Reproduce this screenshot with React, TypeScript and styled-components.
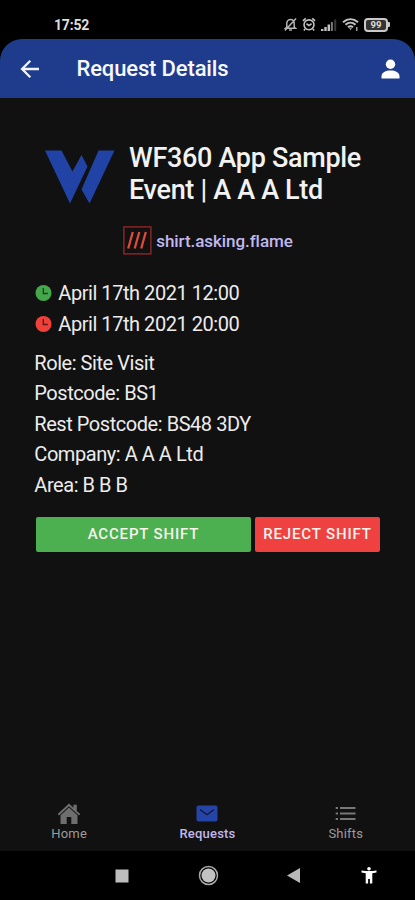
import React from 'react';
import styled, { createGlobalStyle } from 'styled-components';

const GlobalStyle = createGlobalStyle`
  * { box-sizing: border-box; }
  html, body { margin: 0; background: #000; }
  body { font-family: Roboto, "Liberation Sans", sans-serif; color: #f0f0f0; }
  svg { display: block; flex: none; }
`;

const Screen = styled.div`
  display: flex;
  flex-direction: column;
  width: 415px;
  height: 900px;
  overflow: hidden;
  background: #000;
`;

const StatusBar = styled.div`
  display: flex;
  align-items: center;
  justify-content: space-between;
  height: 39px;
  flex: none;
  padding: 10px 25px 0 54px;
`;

const Clock = styled.span`
  font-size: 14px;
  font-weight: 700;
  line-height: 18px;
  letter-spacing: -0.2px;
  color: #dedede;
`;

const StatusIcons = styled.div`
  display: flex;
  align-items: center;
  gap: 5px;
`;

const Header = styled.header`
  display: flex;
  align-items: center;
  height: 59px;
  flex: none;
  padding: 0 15px 0 20px;
  background: #1f3c8c;
  border-radius: 22px 22px 0 0;
`;

const HeaderTitle = styled.h1`
  flex: 1;
  margin: 0 0 0 36.5px;
  font-size: 22px;
  font-weight: 500;
  line-height: 28px;
  letter-spacing: -0.14px;
  color: #f7f8fc;
`;

const Content = styled.main`
  flex: 1;
  padding: 44px 35px 0;
  background: #111;
`;

const EventRow = styled.div`
  display: flex;
  align-items: center;
  gap: 14.5px;
  height: 64px;
  padding-left: 9.5px;
`;

const EventTitle = styled.h2`
  margin: 0;
  font-size: 27px;
  font-weight: 500;
  line-height: 32px;
  letter-spacing: -0.32px;
  white-space: nowrap;
  color: #f2f2f2;
`;

const LocationLink = styled.div`
  display: flex;
  align-items: center;
  justify-content: center;
  gap: 4px;
  height: 29px;
  margin: 20px 0 23px 1px;
`;

const LocationText = styled.span`
  font-size: 17px;
  font-weight: 500;
  line-height: 24px;
  letter-spacing: -0.06px;
  color: #c0b8ee;
`;

const Lines = styled.div<{ $top?: number }>`
  display: flex;
  flex-direction: column;
  margin-top: ${(p) => p.$top ?? 0}px;
`;

const Line = styled.div`
  display: flex;
  align-items: center;
  gap: 6px;
  height: 30.5px;
  margin-left: -0.7px;
  font-size: 20px;
  line-height: 30px;
  letter-spacing: -0.45px;
  white-space: nowrap;
  color: #ececec;
`;

const Actions = styled.div`
  display: flex;
  gap: 4px;
  margin: 16.5px 0 0 1px;
`;

const Action = styled.button<{ $color: string; $width: number }>`
  width: ${(p) => p.$width}px;
  height: 35px;
  padding: 0;
  border: 0;
  border-radius: 2px;
  background: ${(p) => p.$color};
  color: #f6f3ef;
  font-family: inherit;
  font-size: 15px;
  font-weight: 500;
  letter-spacing: 0.85px;
  white-space: nowrap;
`;

const Tabs = styled.nav`
  display: flex;
  height: 56px;
  flex: none;
  background: #111;
`;

const Tab = styled.div<{ $active?: boolean }>`
  display: flex;
  flex: 1;
  flex-direction: column;
  align-items: center;
  padding-top: 6px;
  font-size: 13px;
  font-weight: ${(p) => (p.$active ? 500 : 400)};
  line-height: 16px;
  letter-spacing: 0.2px;
  color: ${(p) => (p.$active ? '#c0b8ee' : '#9c9c9c')};
`;

const TabIcon = styled.div`
  display: flex;
  align-items: center;
  height: 25px;
`;

const SystemBar = styled.div`
  display: grid;
  grid-template-columns: 80px 84px 88px 82px 70px;
  align-items: center;
  justify-items: center;
  height: 49px;
  flex: none;
`;

const SystemButton = styled.div<{ $column: number }>`
  grid-column: ${(p) => p.$column};
`;

const SilentIcon = () => (
  <svg width="13" height="15" viewBox="0 0 14 16" fill="none" stroke="#b5b5b5" strokeWidth="1.6">
    <path d="M3 11V7c0-3 2-4.5 4-4.5S11 4 11 7v4l1.3 1H1.7zM5.5 13.8h3M1 14.5 13 1.5" />
  </svg>
);

const AlarmIcon = () => (
  <svg width="14" height="15" viewBox="0 0 15 16" fill="none" stroke="#c4c4c4" strokeWidth="1.7">
    <circle cx="7.5" cy="8.3" r="5.3" />
    <path d="M1 4.2 4 1.4M14 4.2l-3-2.8M4.8 7.2l2.7 2 2.7-2M3.3 12.7 2 14.4M11.7 12.7l1.3 1.7" />
  </svg>
);

const SignalIcon = () => (
  <svg width="16" height="14" viewBox="0 0 16 14">
    <path fill="#c4c4c4" d="M0 11h2.4v2H0zM3.3 9h2.4v4H3.3zM6.6 6.5H9V13H6.6z" />
    <path fill="#777" d="M9.9 4h2v9h-2z" />
    <path fill="#383838" d="M13.2 1.5h2V13h-2z" />
  </svg>
);

const WifiIcon = () => (
  <svg width="17" height="15" viewBox="0 0 17 15" fill="none" stroke="#c4c4c4" strokeWidth="2">
    <path d="M1 5.2c4.6-4 10.4-4 15 0M3.5 7.8c3-2.7 7-2.7 10 0M6 10.3c1.6-1.4 3.4-1.4 5 0" />
    <path d="M7 11.2h3L8.5 13z" fill="#c4c4c4" stroke="none" />
    <path d="M14.8 10v4" strokeWidth="1.2" />
  </svg>
);

const BatteryBody = styled.div`
  display: flex;
  align-items: center;
  justify-content: center;
  width: 24px;
  height: 14px;
  border: 2px solid #c9c9c9;
  border-radius: 4px;
  background: #333;
  color: #ddd;
  font-size: 9.5px;
  font-weight: 700;
  line-height: 9px;
`;

const Battery = styled.div`
  display: flex;
  align-items: center;

  &::after {
    content: '';
    width: 2px;
    height: 5px;
    background: #c9c9c9;
    border-radius: 0 1px 1px 0;
  }
`;

const BackIcon = () => (
  <svg width="20" height="20" viewBox="0 0 20 20" fill="none" stroke="#f2f4fa" strokeWidth="2.3">
    <path d="M19 10H2.5M10.3 1.8 2.1 10l8.2 8.2" />
  </svg>
);

const PersonIcon = () => (
  <svg width="19" height="20" viewBox="0 0 19 20" fill="#fff">
    <circle cx="9.5" cy="5.3" r="4.7" />
    <path d="M.5 19.5v-2.2c0-3.8 4.3-5.8 9-5.8s9 2 9 5.8v2.2z" />
  </svg>
);

const LogoSvg = styled.svg`
  width: 70px;
  height: 54px;
  margin-top: 5px;
  fill: #2143a5;
`;

const Logo = () => (
  <LogoSvg viewBox="0 0 70 54">
    <path d="M0 .5h16.5L27.5 21.5 36.5 5l6 11.5L25 53.5z" />
    <path d="M53.5.5H69.5L44.5 53.5 36.5 39.5z" />
  </LogoSvg>
);

const What3WordsIcon = () => (
  <svg width="29" height="29" viewBox="0 0 29 29" fill="none">
    <rect x=".9" y=".9" width="27" height="27" stroke="#8e2727" strokeWidth="1.4" />
    <path d="M9.8 6 5.2 22.5M16.3 6l-4.6 16.5M22.8 6l-4.6 16.5" stroke="#df4939" strokeWidth="2.3" />
  </svg>
);

const ClockIcon = ({ color }: { color: string }) => (
  <svg width="18" height="18" viewBox="0 0 18 18">
    <circle cx="9.5" cy="9" r="8" fill={color} />
    <path d="M9.3 4v5.5h4.5" fill="none" stroke="#151515" strokeOpacity=".75" strokeWidth="1.3" />
  </svg>
);

const HomeIcon = () => (
  <svg width="24" height="22" viewBox="0 0 24 22" fill="#6e6e6e">
    <path d="M12 .5.7 11l1.3 1.4L12 3.2l10 9.2 1.3-1.4L19.8 8V1.8h-3.4v3z" />
    <path d="M12 4.5 3.5 12.2V21h6.2v-7h4.6v7h6.2v-8.8z" />
  </svg>
);

const MailIcon = () => (
  <svg width="22" height="17" viewBox="0 0 22 17">
    <rect x=".5" y=".5" width="21" height="16" rx="2" fill="#2445a7" />
    <path d="m4 4.5 7 5.2 7-5.2" fill="none" stroke="#101934" strokeWidth="1.4" />
  </svg>
);

const ListIcon = () => (
  <svg width="21" height="15" viewBox="0 0 21 15" stroke="#777" strokeWidth="1.8">
    <path d="M5 2h15.5M5 7.5h15.5M5 13h15.5M.7 2H3M.7 7.5H3M.7 13H3" />
  </svg>
);

const RecentsIcon = () => (
  <svg width="14" height="14" viewBox="0 0 14 14"><rect x=".5" y=".5" width="13" height="13" fill="#bdbdbd" /></svg>
);

const CircleIcon = () => (
  <svg width="21" height="21" viewBox="0 0 21 21">
    <circle cx="10.5" cy="10.5" r="9" fill="none" stroke="#aaa" strokeWidth="1.5" />
    <circle cx="10.5" cy="10.5" r="7" fill="#c3c3c3" />
  </svg>
);

const TriangleIcon = () => (
  <svg width="13" height="15" viewBox="0 0 13 15"><path d="M13 0v15L0 7.5z" fill="#b8b8b8" /></svg>
);

const AccessibilityIcon = () => (
  <svg width="16" height="17" viewBox="0 0 16 17" fill="#fff">
    <circle cx="8" cy="1.8" r="1.8" />
    <path d="M.5 3.5Q8 4.6 15.5 3.5v2.1l-4.2.6V16.5H8.9V12H7.1v4.5H4.7V6.2L.5 5.6z" />
  </svg>
);

const details = [
  'Role: Site Visit',
  'Postcode: BS1',
  'Rest Postcode: BS48 3DY',
  'Company: A A A Ltd',
  'Area: B B B',
];

export default function App() {
  return (
    <Screen>
      <GlobalStyle />
      <StatusBar>
        <Clock>17:52</Clock>
        <StatusIcons>
          <SilentIcon />
          <AlarmIcon />
          <SignalIcon />
          <WifiIcon />
          <Battery><BatteryBody>99</BatteryBody></Battery>
        </StatusIcons>
      </StatusBar>
      <Header>
        <BackIcon />
        <HeaderTitle>Request Details</HeaderTitle>
        <PersonIcon />
      </Header>
      <Content>
        <EventRow>
          <Logo />
          <EventTitle>WF360 App Sample<br />Event | A A A Ltd</EventTitle>
        </EventRow>
        <LocationLink>
          <What3WordsIcon />
          <LocationText>shirt.asking.flame</LocationText>
        </LocationLink>
        <Lines>
          <Line><ClockIcon color="#43a84a" />April 17th 2021 12:00</Line>
          <Line><ClockIcon color="#f0403a" />April 17th 2021 20:00</Line>
        </Lines>
        <Lines $top={8.5}>
          {details.map((text) => <Line key={text}>{text}</Line>)}
        </Lines>
        <Actions>
          <Action $color="#4caf50" $width={215}>ACCEPT SHIFT</Action>
          <Action $color="#f04141" $width={125}>REJECT SHIFT</Action>
        </Actions>
      </Content>
      <Tabs>
        <Tab><TabIcon><HomeIcon /></TabIcon>Home</Tab>
        <Tab $active><TabIcon><MailIcon /></TabIcon>Requests</Tab>
        <Tab><TabIcon><ListIcon /></TabIcon>Shifts</Tab>
      </Tabs>
      <SystemBar>
        <SystemButton $column={2}><RecentsIcon /></SystemButton>
        <SystemButton $column={3}><CircleIcon /></SystemButton>
        <SystemButton $column={4}><TriangleIcon /></SystemButton>
        <SystemButton $column={5}><AccessibilityIcon /></SystemButton>
      </SystemBar>
    </Screen>
  );
}
